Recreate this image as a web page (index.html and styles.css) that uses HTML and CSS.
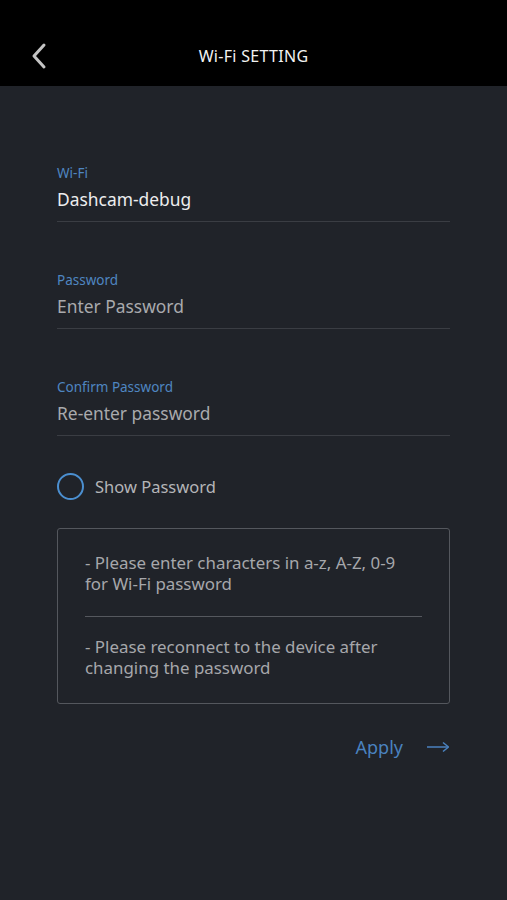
FILE: index.html
```html
<!DOCTYPE html>
<html lang="en">

<head>
    <meta charset="UTF-8">
    <meta name="viewport" content="width=device-width, initial-scale=1.0">
    <title>Wi-Fi SETTING</title>
    <link rel="stylesheet" href="styles.css">
</head>

<body>
    <header class="top-bar">
        <button class="back-btn" aria-label="Back">
            <svg viewBox="0 0 20 28" width="20" height="28">
                <polyline points="14,3 4,14 14,25" fill="none" stroke="#c4c4c4" stroke-width="3" stroke-linecap="round" stroke-linejoin="round"></polyline>
            </svg>
        </button>
        <h1 class="title">Wi-Fi SETTING</h1>
    </header>

    <main class="content">
        <div class="field">
            <div class="field-label">Wi-Fi</div>
            <div class="field-value">Dashcam-debug</div>
        </div>
        <div class="field">
            <div class="field-label">Password</div>
            <div class="field-value placeholder">Enter Password</div>
        </div>
        <div class="field field-last">
            <div class="field-label">Confirm Password</div>
            <div class="field-value placeholder">Re-enter password</div>
        </div>

        <label class="show-pw">
            <span class="radio"></span>
            <span class="show-pw-text">Show Password</span>
        </label>

        <div class="notice">
            <p>- Please enter characters in a-z, A-Z, 0-9<br>for Wi-Fi password</p>
            <hr>
            <p>- Please reconnect to the device after<br>changing the password</p>
        </div>

        <div class="actions">
            <button class="apply-btn">
                <span>Apply</span>
                <svg viewBox="0 0 22 12" width="22" height="12">
                    <line x1="0" y1="6" x2="21" y2="6" stroke="#4a82bf" stroke-width="1.5"></line>
                    <polyline points="16,1.5 21.5,6 16,10.5" fill="none" stroke="#4a82bf" stroke-width="1.5"></polyline>
                </svg>
            </button>
        </div>
    </main>
</body>

</html>
```

FILE: styles.css
```css
body {
    margin: 0;
    min-height: 100vh;
    background: #202329;
    font-family: 'Noto Sans', 'Liberation Sans', sans-serif;
    color: #e8e8ea;
}

.top-bar {
    height: 86px;
    background: #000000;
    display: flex;
    align-items: center;
    justify-content: center;
    position: relative;
    padding-top: 26px;
    box-sizing: border-box;
}

.back-btn {
    position: absolute;
    left: 30px;
    top: 42px;
    background: none;
    border: 0;
    padding: 0;
    display: flex;
}

.title {
    margin: 0;
    font-size: 16px;
    font-weight: 400;
    color: #f2f2f2;
    letter-spacing: 0.3px;
}

.content {
    padding: 79px 57px 0;
}

.field {
    border-bottom: 1px solid #3a3d43;
    padding-bottom: 10px;
    margin-bottom: 50px;
}

.field-label {
    font-size: 13.5px;
    line-height: 17px;
    color: #4f86c1;
}

.field-value {
    margin-top: 5px;
    font-size: 17.4px;
    line-height: 24px;
    color: #ededee;
}

.field-value.placeholder {
    color: #a9aaad;
}

.field-last {
    margin-bottom: 37px;
}

.show-pw {
    display: flex;
    align-items: center;
    gap: 11px;
}

.radio {
    width: 23px;
    height: 23px;
    border: 2.5px solid #4b8fd0;
    border-radius: 50%;
}

.show-pw-text {
    font-size: 16.5px;
    color: #b4b5b8;
}

.notice {
    margin-top: 28px;
    border: 1px solid #54575d;
    border-radius: 3px;
    padding: 23px 27px 25px;
}

.notice p {
    margin: 0;
    font-size: 16.9px;
    line-height: 21px;
    color: #a6a7ab;
}

.notice hr {
    border: 0;
    border-top: 1px solid #55585e;
    margin: 22px 0 19px;
}

.actions {
    display: flex;
    justify-content: flex-end;
    margin-top: 31px;
}

.apply-btn {
    display: flex;
    align-items: center;
    gap: 24px;
    background: none;
    border: 0;
    padding: 0 1px 0 0;
    font-family: inherit;
    font-size: 18px;
    color: #4a82bf;
}
```
